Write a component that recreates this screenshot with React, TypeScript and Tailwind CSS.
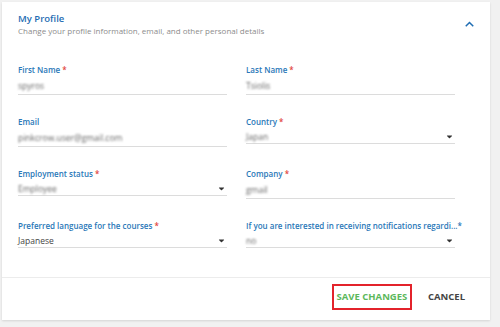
import { FaCaretDown } from "react-icons/fa";

type FieldProps = {
  label: string;
  value: string;
  required?: boolean;
  select?: boolean;
  blur?: boolean;
};

function Field({ label, value, required, select, blur = true }: FieldProps) {
  return (
    <div className="h-[52px] flex flex-col">
      <div className="h-3 text-[8px] leading-3 font-semibold text-[#2a78b8] whitespace-nowrap">
        {label}
        {required && <span className="text-[#e2453c]"> *</span>}
      </div>
      <div
        className={
          select
            ? "mt-[2px] h-[14px] flex items-center justify-between border-b border-[#dcdcdc]"
            : "mt-[2px] h-[17px] flex items-center justify-between border-b border-[#dcdcdc]"
        }
      >
        <span
          className={
            blur
              ? "text-[8.5px] text-[#666] blur-[1.2px] leading-3"
              : "text-[8.5px] text-[#444] leading-3"
          }
        >
          {value}
        </span>
        {select && <FaCaretDown className="size-[9px] text-[#333] mr-[1px]" />}
      </div>
    </div>
  );
}

export default function App() {
  return (
    <div
      className="w-[500px] h-[327px] bg-[#f1f1f1] pt-[2px] pl-[2px]"
      style={{ fontFamily: '"Open Sans", "Liberation Sans", sans-serif' }}
    >
      <div className="w-[488px] h-[318px] bg-white shadow-[0_1px_2px_rgba(0,0,0,0.12)] flex flex-col">
        <div className="flex justify-between px-4 pt-[10px] h-[62px]">
          <div>
            <div className="text-[9.5px] leading-[13px] font-semibold text-[#1f6db3]">
              My Profile
            </div>
            <div className="text-[8px] leading-[11px] text-[#8c8c8c]">
              Change your profile information, email, and other personal details
            </div>
          </div>
          <svg
            viewBox="0 0 12 8"
            className="w-[9px] h-[6px] mt-[9px]"
            fill="none"
            stroke="#1f6db3"
            strokeWidth="2"
          >
            <path d="M1 7 L6 2 L11 7" />
          </svg>
        </div>
        <div className="grid grid-cols-2 auto-rows-[52px] gap-x-[19px] pl-4 pr-[35px] pb-[5px]">
          <Field label="First Name" value="spyros" required />
          <Field label="Last Name" value="Tsiolis" required />
          <Field label="Email" value="pinkcrow.user@gmail.com" />
          <Field label="Country" value="Japan" required select />
          <Field label="Employment status" value="Employee" required select />
          <Field label="Company" value="gmail" required />
          <Field
            label="Preferred language for the courses"
            value="Japanese"
            required
            select
            blur={false}
          />
          <Field
            label="If you are interested in receiving notifications regardi...*"
            value="no"
            select
          />
        </div>
        <div className="border-t border-[#ececec] flex-1 flex items-center justify-end pr-[25px] pb-[4px] gap-[16px]">
          <button className="h-[26px] w-[80px] border-2 border-[#e3232b] text-[9.5px] font-bold text-[#5cb85c]">
            SAVE CHANGES
          </button>
          <button className="text-[9.5px] font-bold text-[#444]">CANCEL</button>
        </div>
      </div>
    </div>
  );
}
